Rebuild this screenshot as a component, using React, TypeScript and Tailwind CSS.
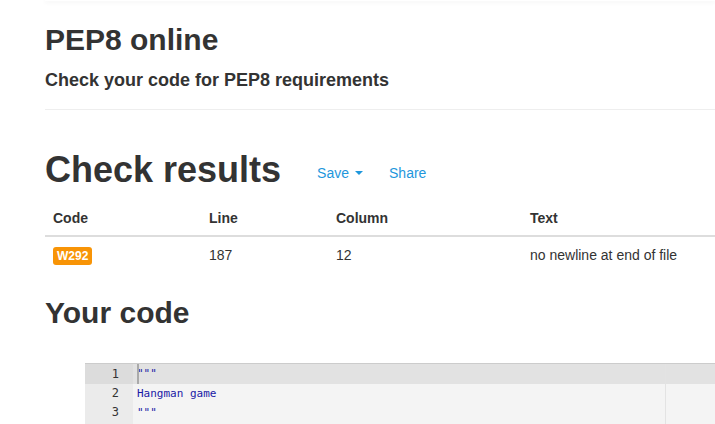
const results = [
  { code: "W292", line: 187, column: 12, text: "no newline at end of file" },
];

const codeLines = ['"""', "Hangman game", '"""'];

const App = () => {
  return (
    <div
      className="min-h-[424px] w-[715px] overflow-hidden bg-white text-[#333]"
      style={{ fontFamily: '"Liberation Sans", Arial, sans-serif' }}
    >
      <div className="ml-[45px] h-px bg-white shadow-[0_1px_4px_rgba(0,0,0,0.12)]" />
      <div className="w-[1100px] pl-[45px]">
        <h1 className="mt-[22px] text-[30px] font-bold leading-[33px]">PEP8 online</h1>
        <p className="mt-[14px] text-[18px] font-bold leading-[20px]">
          Check your code for PEP8 requirements
        </p>
        <hr className="mt-[19px] border-t border-[#eee]" />

        <div className="mt-[40px] flex items-center">
          <h2 className="text-[36px] font-bold leading-[40px]">Check results</h2>
          <div className="mt-[5px] flex items-center text-[14px] leading-[20px] text-[#1f97dc]">
            <a className="ml-[36px] flex items-center">
              Save
              <span className="ml-[6px] inline-block h-0 w-0 border-x-[4px] border-t-[4px] border-x-transparent border-t-[#1f97dc]" />
            </a>
            <a className="ml-[26px]">Share</a>
          </div>
        </div>

        <table className="mt-[10px] text-left text-[14px] leading-[20px]">
          <thead>
            <tr className="border-b-2 border-[#ddd]">
              <th className="w-[156px] px-2 pt-2 pb-[7px] font-bold">Code</th>
              <th className="w-[127px] px-2 pt-2 pb-[7px] font-bold">Line</th>
              <th className="w-[194px] px-2 pt-2 pb-[7px] font-bold">Column</th>
              <th className="w-[400px] px-2 pt-2 pb-[7px] font-bold">Text</th>
            </tr>
          </thead>
          <tbody>
            {results.map((r) => (
              <tr key={r.code}>
                <td className="px-2 py-2">
                  <span className="inline-block rounded-[3px] bg-[#f89406] px-1 py-[2px] text-[12px] font-bold leading-[14px] text-white">
                    {r.code}
                  </span>
                </td>
                <td className="px-2 py-2">{r.line}</td>
                <td className="px-2 py-2">{r.column}</td>
                <td className="px-2 py-2">{r.text}</td>
              </tr>
            ))}
          </tbody>
        </table>

        <h2 className="mt-[23px] text-[30px] font-bold leading-[33px]">Your code</h2>

        <div
          className="relative ml-[40px] mt-[34px] flex min-h-[80px] border-t border-[#ccc] bg-[#f4f4f4] text-[11px]"
          style={{ fontFamily: '"DejaVu Sans Mono", "Liberation Mono", monospace' }}
        >
          <div className="w-[48px] bg-[#ebebeb] text-right text-[12px] text-[#333]">
            {codeLines.map((_, i) => (
              <div
                key={i}
                className={
                  i === 0
                    ? "h-[20px] bg-[#dcdcdc] pr-[14px] leading-[20px]"
                    : "h-[19px] pr-[14px] leading-[19px]"
                }
              >
                {i + 1}
              </div>
            ))}
          </div>
          <div className="flex-1">
            {codeLines.map((line, i) => (
              <div
                key={i}
                className={
                  i === 0
                    ? "relative h-[20px] bg-[#e2e2e2] pl-[4px] leading-[20px] text-[#1a1aa6]"
                    : "h-[19px] pl-[4px] leading-[19px] text-[#1a1aa6]"
                }
              >
                {i === 0 && (
                  <span className="absolute left-[4px] top-0 h-[20px] w-[2px] bg-[#aaa]" />
                )}
                {line}
              </div>
            ))}
          </div>
          <div className="absolute left-[580px] top-0 h-full w-px bg-[#e3e3e3]" />
        </div>
      </div>
    </div>
  );
};

export default App;
